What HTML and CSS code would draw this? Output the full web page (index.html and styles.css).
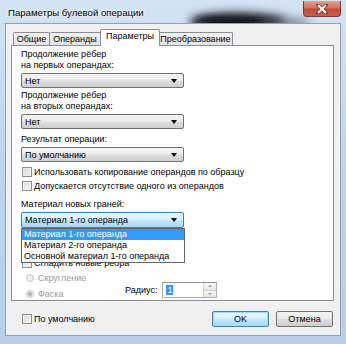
FILE: index.html
```html
<!DOCTYPE html>
<html lang="ru">
<head>
    <meta charset="UTF-8">
    <title>Параметры булевой операции</title>
    <link rel="stylesheet" href="styles.css">
</head>
<body>
    <div class="window">
        <div class="titlebar">
            <svg class="glass" width="346" height="23" viewBox="0 0 346 23">
                <defs>
                    <filter id="soft" x="-50%" y="-200%" width="200%" height="500%">
                        <feGaussianBlur stdDeviation="5"/>
                    </filter>
                </defs>
                <ellipse cx="238" cy="21" rx="48" ry="8" fill="#1e1e22" filter="url(#soft)"/>
                <ellipse cx="228" cy="24" rx="36" ry="6" fill="#111114" filter="url(#soft)"/>
                <ellipse cx="285" cy="23" rx="26" ry="5" fill="#45454f" opacity="0.6" filter="url(#soft)"/>
            </svg>
            <span class="title">Параметры булевой операции</span>
            <span class="close">
                <svg width="12" height="10" viewBox="0 0 12 10">
                    <path d="M2 1 L10 9 M10 1 L2 9" stroke="#6b2a2a" stroke-width="3.2" stroke-linecap="square"/>
                    <path d="M2 1 L10 9 M10 1 L2 9" stroke="#ffffff" stroke-width="2"/>
                </svg>
            </span>
        </div>

        <div class="client">
            <div class="tabs">
                <span class="tab first">Общие</span>
                <span class="tab operands">Операнды</span>
                <span class="tab active">Параметры</span>
                <span class="tab transform">Преобразование</span>
            </div>

            <div class="panel">
                <div class="label">Продолжение рёбер<br>на первых операндах:</div>
                <div class="combo"><span>Нет</span><i class="arrow"></i></div>

                <div class="label">Продолжение рёбер<br>на вторых операндах:</div>
                <div class="combo"><span>Нет</span><i class="arrow"></i></div>

                <div class="label gap">Результат операции:</div>
                <div class="combo"><span>По умолчанию</span><i class="arrow"></i></div>

                <div class="check first-check"><i class="box"></i>Использовать копирование операндов по образцу</div>
                <div class="check"><i class="box"></i><span><u>Д</u>опускается отсутствие одного из операндов</span></div>

                <div class="label material">Материал новых граней:</div>
                <div class="combo-wrap">
                    <div class="combo focused"><span>Материал 1-го операнда</span><i class="arrow"></i></div>
                    <div class="dropdown">
                        <div class="item selected">Материал 1-го операнда</div>
                        <div class="item">Материал 2-го операнда</div>
                        <div class="item">Основной материал 1-го операнда</div>
                    </div>
                </div>

                <div class="check smooth"><i class="box"></i>Сгладить новые ребра</div>

                <div class="bottom-row">
                    <div class="radios">
                        <div class="radio-row"><i class="radio"></i>Скругление</div>
                        <div class="radio-row second"><i class="radio checked"></i>Фаска</div>
                    </div>
                    <div class="radius">
                        <span class="radius-label">Радиус:</span>
                        <div class="spin">
                            <span class="spin-value"><span class="sel">1</span></span>
                            <span class="spin-buttons">
                                <i class="up"></i>
                                <i class="down"></i>
                            </span>
                        </div>
                    </div>
                </div>
            </div>

            <div class="footer">
                <div class="check footer-check"><i class="box"></i>По умолчанию</div>
                <div class="buttons">
                    <span class="btn default">OK</span>
                    <span class="btn">Отмена</span>
                </div>
            </div>
        </div>
    </div>
</body>
</html>
```

FILE: styles.css
```css
body {
    margin: 0;
    font-family: "Liberation Sans", Arial, sans-serif;
    font-size: 9px;
    color: #000;
    background: #fff;
}
.window {
    width: 346px;
    height: 344px;
    display: flex;
    flex-direction: column;
    background: linear-gradient(180deg, #d3e3f3 0%, #c1d6ec 40%, #b8cfe7 100%);
    overflow: hidden;
}

/* title bar, with the dark desktop showing through the glass */
.titlebar {
    height: 23px;
    flex: none;
    display: flex;
    align-items: flex-start;
    position: relative;
}
.glass {
    position: absolute;
    left: 0;
    top: 0;
}
.title {
    font-size: 9.6px;
    margin: 7px 0 0 8px;
    line-height: 11px;
    text-shadow: 0 0 6px #fff, 0 0 3px #fff;
    position: relative;
}
.close {
    margin: 1px 5px 0 auto;
    width: 38px;
    height: 16px;
    box-sizing: border-box;
    border: 1px solid #7c3a3a;
    border-top: none;
    border-radius: 0 0 4px 4px;
    background: linear-gradient(180deg, #e2a08e 0%, #d07262 45%, #c04a3a 55%, #c9603f 100%);
    display: flex;
    align-items: center;
    justify-content: center;
    position: relative;
}

/* client area */
.client {
    flex: none;
    height: 313px;
    box-sizing: border-box;
    margin: 0 5px;
    border: 1px solid #8ba2ba;
    background: #f0f0f0;
    padding: 5px 6px 8px 5px;
    display: flex;
    flex-direction: column;
    position: relative;
}
.tabs {
    height: 16px;
    display: flex;
    align-items: flex-end;
    padding-left: 2px;
    flex: none;
}
.tab {
    height: 13px;
    box-sizing: border-box;
    border: 1px solid #898c95;
    border-bottom: none;
    border-left: none;
    background: linear-gradient(180deg, #f2f2f2, #e3e3e3);
    text-align: center;
    line-height: 12px;
    border-radius: 2px 2px 0 0;
    white-space: nowrap;
}
.tab.first {
    border-left: 1px solid #898c95;
    width: 37px;
}
.tab.operands {
    width: 51px;
}
.tab.active {
    width: 60px;
    height: 17px;
    margin: 0 -1px -1px -1px;
    background: #fff;
    position: relative;
    z-index: 1;
    border-left: 1px solid #898c95;
    line-height: 13px;
}
.tab.transform {
    width: 74px;
}
.panel {
    height: 256px;
    box-sizing: border-box;
    border: 1px solid #898c95;
    background: #fff;
    padding: 3px 0 0 9px;
    flex: none;
}

/* labels and combo boxes */
.label {
    line-height: 11px;
}
.label + .combo {
    margin-top: 2px;
}
.combo + .label {
    margin-top: 2px;
}
.combo + .label.gap {
    margin-top: 5px;
}
.combo {
    width: 163px;
    height: 15px;
    box-sizing: border-box;
    border: 1px solid #707070;
    border-radius: 2px;
    background: linear-gradient(180deg, #f4f4f4 0%, #ebebeb 48%, #dddddd 52%, #cfcfcf 100%);
    display: flex;
    align-items: center;
    justify-content: space-between;
    padding: 0 6px 0 3px;
    line-height: 12px;
}
.combo.focused {
    border-color: #3c7fb1;
    height: 16px;
    background: linear-gradient(180deg, #eaf6fd 0%, #d9f0fc 48%, #bee6fd 52%, #a7d9f5 100%);
}
.arrow {
    width: 0;
    height: 0;
    border-left: 3px solid transparent;
    border-right: 3px solid transparent;
    border-top: 4px solid #000;
}

/* check boxes */
.check {
    display: flex;
    align-items: center;
    height: 14px;
    padding-left: 1px;
}
.first-check {
    margin-top: 3px;
}
.check u {
    text-decoration: underline;
}
.box {
    width: 10px;
    height: 10px;
    box-sizing: border-box;
    border: 1px solid #8f8f8f;
    background: linear-gradient(135deg, #d4d7db, #f8f8f8);
    box-shadow: inset 0 0 0 1px #f0f0f0;
    margin-right: 2px;
    flex: none;
}
.label.material {
    margin-top: 6px;
}
.combo-wrap {
    position: relative;
    width: 163px;
    margin-top: 2px;
}
.dropdown {
    position: absolute;
    top: 16px;
    left: 0;
    width: 164px;
    box-sizing: border-box;
    border: 1px solid #646464;
    background: #fff;
    z-index: 2;
}
.item {
    height: 11px;
    line-height: 11px;
    padding-left: 2px;
}
.item.selected {
    background: #3399ff;
    color: #fff;
}
.check.smooth {
    margin-top: 29px;
    height: 12px;
}

/* radius group */
.bottom-row {
    display: flex;
    align-items: flex-end;
}
.radios {
    width: 99px;
    padding-left: 5px;
    color: #9a9a9a;
}
.radio-row {
    display: flex;
    align-items: center;
    height: 12px;
    margin-top: 3px;
}
.radio-row.second {
    margin-top: 4px;
}
.radio {
    width: 8px;
    height: 8px;
    box-sizing: border-box;
    border: 1px solid #c4c4c4;
    border-radius: 50%;
    background: #f2f2f2;
    margin-right: 4px;
    display: flex;
    align-items: center;
    justify-content: center;
}
.radio.checked::after {
    content: "";
    width: 4px;
    height: 4px;
    border-radius: 50%;
    background: #b0b0b0;
}
.radius {
    display: flex;
    align-items: center;
    margin-bottom: 2px;
}
.radius-label {
    margin-right: 5px;
}
.spin {
    width: 55px;
    height: 16px;
    box-sizing: border-box;
    border: 1px solid #abadb3;
    border-top-color: #8e9297;
    background: #fff;
    display: flex;
}
.spin-value {
    flex: 1;
    padding: 2px 0 0 3px;
    line-height: 10px;
}
.sel {
    background: #3399ff;
    color: #fff;
    padding: 0 1px;
}
.spin-buttons {
    width: 12px;
    display: flex;
    flex-direction: column;
    border-left: 1px solid #d0d0d0;
}
.spin-buttons i {
    flex: 1;
    background: linear-gradient(180deg, #f6f6f6, #e6e6e6);
    display: flex;
    align-items: center;
    justify-content: center;
}
.spin-buttons i + i {
    border-top: 1px solid #d0d0d0;
}
.up::after,
.down::after {
    content: "";
    border-left: 2px solid transparent;
    border-right: 2px solid transparent;
}
.up::after {
    border-bottom: 2px solid #9a9a9a;
}
.down::after {
    border-top: 2px solid #9a9a9a;
}

/* footer */
.footer {
    margin-top: 10px;
    height: 16px;
    display: flex;
    align-items: center;
    padding-left: 10px;
}
.buttons {
    margin-left: auto;
    margin-right: 1px;
    display: flex;
    gap: 7px;
}
.btn {
    width: 57px;
    height: 16px;
    box-sizing: border-box;
    border: 1px solid #707070;
    border-radius: 2px;
    background: linear-gradient(180deg, #f2f2f2 0%, #ebebeb 48%, #dddddd 52%, #cfcfcf 100%);
    text-align: center;
    line-height: 14px;
}
.btn.default {
    border-color: #3c7fb1;
    background: linear-gradient(180deg, #eaf6fd 0%, #d9f0fc 48%, #bee6fd 52%, #a7d9f5 100%);
    box-shadow: inset 0 0 0 1px #9fdcf7;
}
```
